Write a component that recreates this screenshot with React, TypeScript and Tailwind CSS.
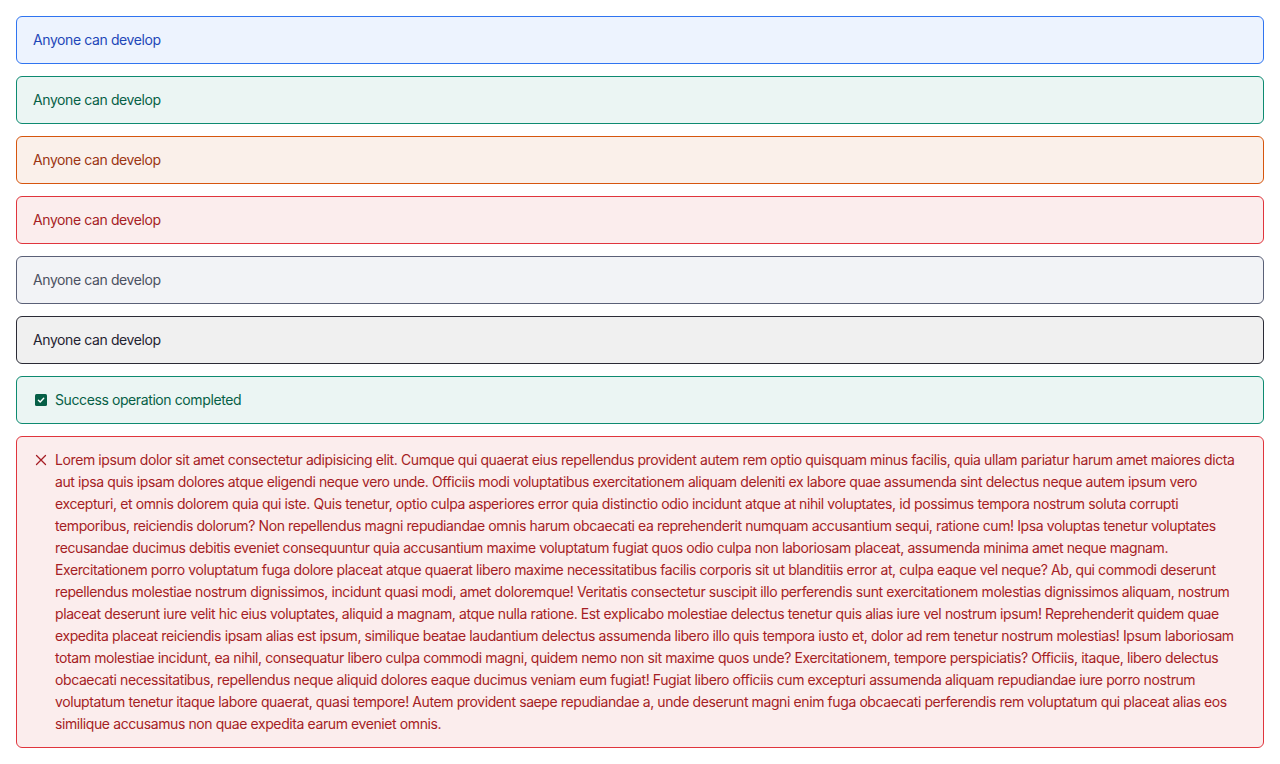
import React from "react";

type Tone = "info" | "success" | "warning" | "danger" | "neutral" | "dark";

const TONES: Record<Tone, string> = {
  info: "border-[#2f74f0] bg-[#edf3fe] text-[#1e47b8]",
  success: "border-[#0e8a70] bg-[#ebf5f3] text-[#065f46]",
  warning: "border-[#d6560e] bg-[#faf0ea] text-[#9a3412]",
  danger: "border-[#e0353d] bg-[#fbeded] text-[#a51d24]",
  neutral: "border-[#5a6077] bg-[#f2f3f6] text-[#4b5060]",
  dark: "border-[#2b2b36] bg-[#f0f0f0] text-[#1f2230]",
};

const LOREM =
  "Lorem ipsum dolor sit amet consectetur adipisicing elit. Cumque qui quaerat eius repellendus provident autem rem optio quisquam minus facilis, quia ullam pariatur harum amet maiores dicta aut ipsa quis ipsam dolores atque eligendi neque vero unde. Officiis modi voluptatibus exercitationem aliquam deleniti ex labore quae assumenda sint delectus neque autem ipsum vero excepturi, et omnis dolorem quia qui iste. Quis tenetur, optio culpa asperiores error quia distinctio odio incidunt atque at nihil voluptates, id possimus tempora nostrum soluta corrupti temporibus, reiciendis dolorum? Non repellendus magni repudiandae omnis harum obcaecati ea reprehenderit numquam accusantium sequi, ratione cum! Ipsa voluptas tenetur voluptates recusandae ducimus debitis eveniet consequuntur quia accusantium maxime voluptatum fugiat quos odio culpa non laboriosam placeat, assumenda minima amet neque magnam. Exercitationem porro voluptatum fuga dolore placeat atque quaerat libero maxime necessitatibus facilis corporis sit ut blanditiis error at, culpa eaque vel neque? Ab, qui commodi deserunt repellendus molestiae nostrum dignissimos, incidunt quasi modi, amet doloremque! Veritatis consectetur suscipit illo perferendis sunt exercitationem molestias dignissimos aliquam, nostrum placeat deserunt iure velit hic eius voluptates, aliquid a magnam, atque nulla ratione. Est explicabo molestiae delectus tenetur quis alias iure vel nostrum ipsum! Reprehenderit quidem quae expedita placeat reiciendis ipsam alias est ipsum, similique beatae laudantium delectus assumenda libero illo quis tempora iusto et, dolor ad rem tenetur nostrum molestias! Ipsum laboriosam totam molestiae incidunt, ea nihil, consequatur libero culpa commodi magni, quidem nemo non sit maxime quos unde? Exercitationem, tempore perspiciatis? Officiis, itaque, libero delectus obcaecati necessitatibus, repellendus neque aliquid dolores eaque ducimus veniam eum fugiat! Fugiat libero officiis cum excepturi assumenda aliquam repudiandae iure porro nostrum voluptatum tenetur itaque labore quaerat, quasi tempore! Autem provident saepe repudiandae a, unde deserunt magni enim fuga obcaecati perferendis rem voluptatum qui placeat alias eos similique accusamus non quae expedita earum eveniet omnis.";

function CheckSquare() {
  return (
    <svg width="12" height="12" viewBox="0 0 12 12" className="shrink-0 mt-[5px]">
      <rect x="0" y="0" width="12" height="12" rx="1.5" fill="currentColor" />
      <path d="M3.4 6.2 L5.2 8 L8.7 4.3" stroke="#ffffff" strokeWidth="1.4" fill="none" strokeLinecap="round" strokeLinejoin="round" />
    </svg>
  );
}

function Cross() {
  return (
    <svg width="12" height="12" viewBox="0 0 12 12" className="shrink-0 mt-[5px]">
      <path d="M1.5 1.5 L10.5 10.5 M10.5 1.5 L1.5 10.5" stroke="currentColor" strokeWidth="1.3" strokeLinecap="round" />
    </svg>
  );
}

function Alert({ tone, icon, children }: { tone: Tone; icon?: React.ReactNode; children: React.ReactNode }) {
  return (
    <div className={"flex gap-2 rounded-md border px-4 py-3 text-sm leading-[22px] font-normal " + TONES[tone]}>
      {icon && <span className="flex pl-[2px]">{icon}</span>}
      <span>{children}</span>
    </div>
  );
}

export default function App() {
  return (
    <div className="min-h-screen bg-white p-4 flex flex-col gap-3 font-['Inter',sans-serif] tracking-[-0.025em]">
      <Alert tone="info">Anyone can develop</Alert>
      <Alert tone="success">Anyone can develop</Alert>
      <Alert tone="warning">Anyone can develop</Alert>
      <Alert tone="danger">Anyone can develop</Alert>
      <Alert tone="neutral">Anyone can develop</Alert>
      <Alert tone="dark">Anyone can develop</Alert>
      <Alert tone="success" icon={<CheckSquare />}>Success operation completed</Alert>
      <Alert tone="danger" icon={<Cross />}>{LOREM}</Alert>
    </div>
  );
}
